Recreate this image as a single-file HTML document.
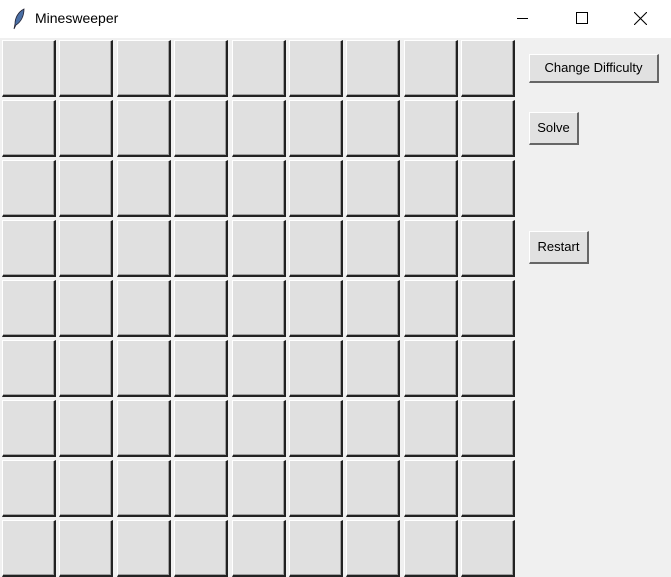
<!DOCTYPE html>
<html><head><style>
body{margin:0;width:671px;height:577px;background:#f0f0f0;position:relative;overflow:hidden;font-family:"Liberation Sans",sans-serif}
.tb{position:absolute;left:0;top:0;width:671px;height:38px;background:#fff}
.tt{position:absolute;left:35px;top:10px;font-size:14px;color:#000}
.c{position:absolute;width:51px;height:54px;background:#e0e0e0;border-top:1px solid #fff;border-left:1px solid #fff;border-right:2px solid #222;border-bottom:2px solid #222;box-shadow:inset -1px -1px 0 #a0a0a0}
.b{position:absolute;background:#e1e1e1;border:1px solid #fff;border-right:2px solid #666;border-bottom:2px solid #666;font-size:13px;color:#000;box-sizing:border-box;text-align:center}
</style></head><body>
<div class="tb">
<svg style="position:absolute;left:12px;top:8px" width="14" height="22" viewBox="0 0 14 22"><path d="M12 1 C6 4 3 10 3 16 L2 21 L4 17 C9 14 12 8 12 1Z" fill="#4a6fa5" stroke="#223" stroke-width="0.8"/></svg>
<div class="tt">Minesweeper</div>
<div style="position:absolute;left:517px;top:18px;width:11px;height:1px;background:#000"></div>
<div style="position:absolute;left:576px;top:12px;width:10px;height:10px;border:1px solid #000"></div>
<svg style="position:absolute;left:634px;top:12px" width="13" height="13"><path d="M0 0L13 13M13 0L0 13" stroke="#000" stroke-width="1.1"/></svg>
</div>
<div id="g"></div>
<div class="b" style="left:529px;top:54px;width:130px;height:29px;line-height:26px">Change Difficulty</div>
<div class="b" style="left:529px;top:112px;width:50px;height:33px;line-height:30px">Solve</div>
<div class="b" style="left:529px;top:231px;width:60px;height:33px;line-height:30px">Restart</div>
<script>
var h='';for(var j=0;j<9;j++)for(var i=0;i<9;i++)h+='<div class="c" style="left:'+Math.round(2+57.4*i)+'px;top:'+(40+60*j)+'px"></div>';
document.getElementById('g').innerHTML=h;
</script>
</body></html>
